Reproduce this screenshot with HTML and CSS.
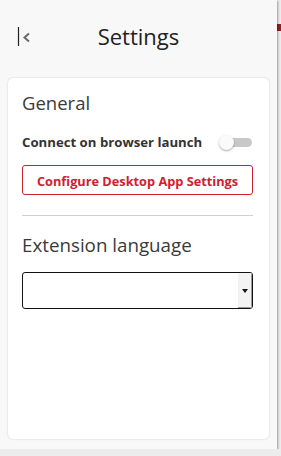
FILE: index.html
```html
<!DOCTYPE html>
<html lang="en">
<head>
  <meta charset="UTF-8" />
  <meta name="viewport" content="width=device-width, initial-scale=1" />
  <title>Settings</title>
  <link rel="stylesheet" href="styles.css">
</head>
<body>
  <span class="page-mark"></span>

  <div class="popup">
    <header class="topbar">
      <button class="back" aria-label="Back">
        <svg width="14" height="20" viewBox="0 0 14 20">
          <line x1="1.5" y1="0" x2="1.5" y2="19" stroke="#222" stroke-width="1.2" />
          <polyline points="12,6.5 7.5,10.5 12,14.5" fill="none" stroke="#6a6a6a" stroke-width="2" />
        </svg>
      </button>
      <h1>Settings</h1>
    </header>

    <main class="card">
      <h2>General</h2>

      <div class="row">
        <span class="label">Connect on browser launch</span>
        <span class="toggle"><span class="knob"></span></span>
      </div>

      <button class="btn-outline">Configure Desktop App Settings</button>

      <hr class="divider" />

      <h2 class="lang-title">Extension language</h2>

      <div class="select">
        <span class="select-value"></span>
        <span class="select-arrow">
          <svg width="6" height="4" viewBox="0 0 6 4"><polygon points="0,0 6,0 3,4" fill="#111" /></svg>
        </span>
      </div>
    </main>
  </div>
</body>
</html>
```

FILE: styles.css
```css
body {
  margin: 0;
  background: #ececec;
  font-family: "Open Sans", Arial, sans-serif;
  color: #333;
}

.page-mark {
  position: absolute;
  left: 277px;
  top: 24px;
  width: 6px;
  height: 7px;
  background: #9b1a1f;
}

.popup {
  position: relative;
  width: 277px;
  height: 449px;
  background: #f8f8f8;
  box-shadow: 1px 1px 2px rgba(0, 0, 0, 0.35);
  display: flex;
  flex-direction: column;
}

/* Cabecera */
.topbar {
  height: 78px;
  box-sizing: border-box;
  padding-top: 21px;
  display: flex;
  align-items: flex-start;
  justify-content: center;
  position: relative;
}
.topbar h1 {
  margin: 0;
  font-size: 22px;
  line-height: 30px;
  font-weight: 400;
  color: #222;
}
.back {
  position: absolute;
  left: 17px;
  top: 27px;
  border: none;
  background: none;
  padding: 0;
  height: 20px;
  cursor: pointer;
}

/* Tarjeta */
.card {
  margin: 0 8px 10px 8px;
  flex: 1;
  background: #fff;
  border-radius: 5px;
  box-shadow: 0 0 2px rgba(0, 0, 0, 0.2);
  padding: 13px 16px 0 14px;
}
.card h2 {
  margin: 0;
  font-size: 18.5px;
  line-height: 24px;
  font-weight: 400;
  color: #3a3a3a;
}
.row {
  display: flex;
  align-items: center;
  justify-content: space-between;
  margin-top: 19px;
  height: 16px;
}
.label {
  font-size: 13.2px;
  line-height: 16px;
  font-weight: 700;
  color: #333;
}
.toggle {
  position: relative;
  width: 32px;
  height: 9px;
  border-radius: 5px;
  background: #c8c8c8;
  margin-right: 1px;
}
.knob {
  position: absolute;
  left: -1px;
  top: -3px;
  width: 15px;
  height: 15px;
  border-radius: 50%;
  background: #fafafa;
  box-shadow: 0 1px 2px rgba(0, 0, 0, 0.35);
}

.btn-outline {
  display: block;
  width: 100%;
  margin-top: 15px;
  height: 30px;
  padding: 1px 0 0 0;
  border: 1px solid #cf2030;
  border-radius: 3px;
  background: #fff;
  color: #cf2030;
  font-family: inherit;
  font-size: 12.75px;
  font-weight: 700;
  cursor: pointer;
}

.divider {
  border: none;
  border-top: 1px solid #d0d0d0;
  margin: 20px 0 0 0;
}

.card .lang-title {
  margin-top: 17px;
  font-size: 18.75px;
}

.select {
  margin-top: 15px;
  height: 37px;
  box-sizing: border-box;
  border: 1px solid #111;
  border-radius: 3px;
  display: flex;
  overflow: hidden;
}
.select-value {
  flex: 1;
}
.select-arrow {
  width: 14px;
  background: #f3f3f3;
  display: flex;
  align-items: center;
  justify-content: center;
  box-shadow: inset -1px -1px 0 #999;
}
```
